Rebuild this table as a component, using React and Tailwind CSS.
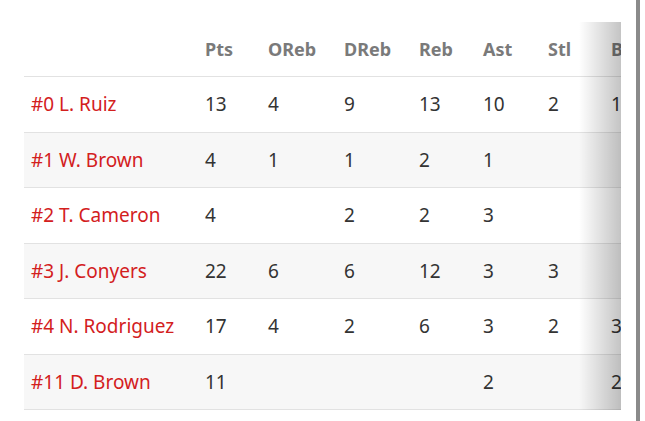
import React from "react";

const rows = [
  ["#0 L. Ruiz", "13", "4", "9", "13", "10", "2", "1"],
  ["#1 W. Brown", "4", "1", "1", "2", "1", "", ""],
  ["#2 T. Cameron", "4", "", "2", "2", "3", "", ""],
  ["#3 J. Conyers", "22", "6", "6", "12", "3", "3", ""],
  ["#4 N. Rodriguez", "17", "4", "2", "6", "3", "2", "3"],
  ["#11 D. Brown", "11", "", "", "", "2", "", "2"],
];
const heads = ["Pts", "OReb", "DReb", "Reb", "Ast", "Stl", "Blk"];
const widths = ["w-[63px]", "w-[76px]", "w-[75px]", "w-[64px]", "w-[65px]", "w-[63px]", "w-[60px]"];

export default function App() {
  return (
    <div className="w-[645px] h-[421px] bg-white flex overflow-hidden" style={{ fontFamily: '"Noto Sans", sans-serif' }}>
      <div className="pt-[22px] pl-[24px]">
        <div className="relative w-[597px] overflow-hidden">
          <div className="w-[800px]">
            <div className="flex h-[55px] items-center border-b border-[#e2e2e2] text-[18px] font-bold text-[#7a7a7a]">
              <div className="w-[181px] shrink-0"></div>
              {heads.map((h, i) => (
                <div key={h} className={`${widths[i]} shrink-0`}>{h}</div>
              ))}
            </div>
            {rows.map((r, ri) => (
              <div key={ri} className={`flex h-[55.5px] items-center border-b border-[#e2e2e2] text-[19px] ${ri % 2 === 1 ? "bg-[#f7f7f7]" : "bg-white"}`}>
                <div className="w-[181px] shrink-0 pl-[7px] text-[#d3201d]">{r[0]}</div>
                {r.slice(1).map((v, i) => (
                  <div key={i} className={`${widths[i]} shrink-0 text-[#333]`}>{v}</div>
                ))}
              </div>
            ))}
          </div>
          <div className="absolute right-0 top-0 bottom-0 w-[42px] bg-gradient-to-r from-transparent to-[rgba(0,0,0,0.23)]"></div>
        </div>
      </div>
      <div className="ml-[15px] w-[4px] h-[421px] bg-[#8a8a8a]"></div>
    </div>
  );
}
